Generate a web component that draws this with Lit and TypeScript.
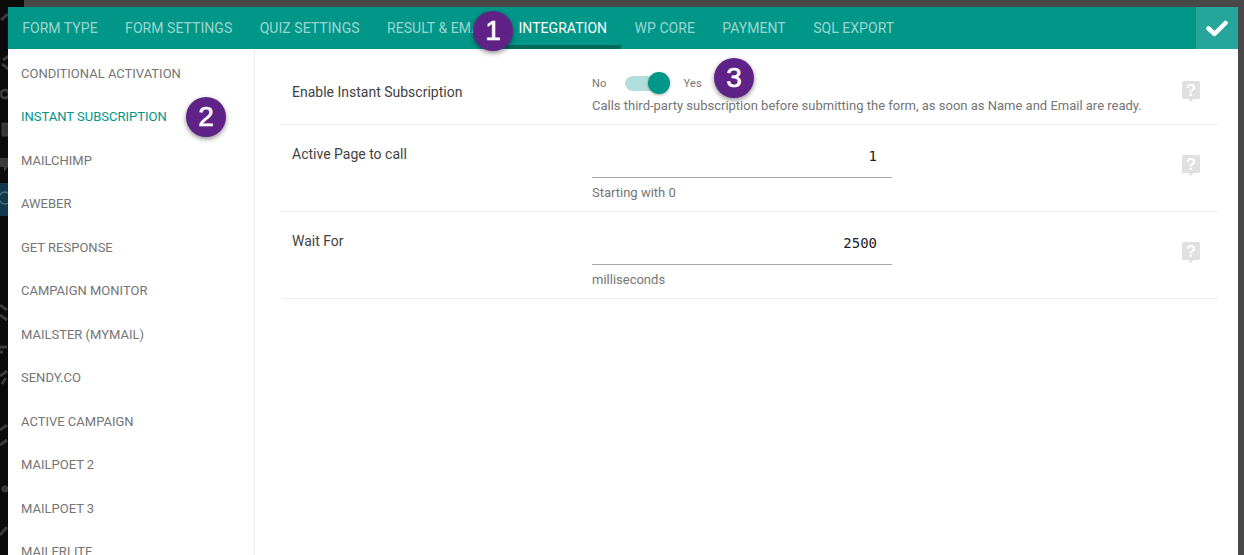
import { LitElement, html, css, svg } from "lit";
import { customElement } from "lit/decorators.js";

const TABS = ["Form Type", "Form Settings", "Quiz Settings", "Result & Email", "Integration", "WP Core", "Payment", "SQL Export"];
const SIDE = ["Conditional Activation", "Instant Subscription", "MailChimp", "AWeber", "Get Response", "Campaign Monitor", "Mailster (MyMail)", "Sendy.co", "Active Campaign", "MailPoet 2", "MailPoet 3", "MailerLite"];

@customElement("app-root")
export class AppRoot extends LitElement {
  static styles = css`
    :host {
      display: block;
      position: relative;
      height: 555px;
      overflow: hidden;
      box-sizing: border-box;
      padding: 7px 6px 0 8px;
      background: linear-gradient(90deg, #0b0b0c 24px, #484848 24px);
      font-family: Roboto, "Liberation Sans", sans-serif;
      font-size: 14px;
      color: #757575;
    }
    .deco { position: absolute; left: 0; top: 0; }
    .window {
      position: relative;
      height: 548px;
      background: #fff;
      display: flex;
      flex-direction: column;
    }
    .topbar {
      flex: none;
      height: 42px;
      background: #009688;
      display: flex;
      align-items: stretch;
      padding-left: 0.5px;
    }
    .tab {
      box-sizing: border-box;
      padding: 0 13.7px;
      line-height: 42px;
      letter-spacing: 0.05px;
      text-transform: uppercase;
      color: rgba(255, 255, 255, 0.62);
      white-space: nowrap;
      height: 42px;
    }
    .tab.on { color: #fff; border-bottom: 4px solid #00695c; }
    .tab.clip { width: 131.5px; overflow: hidden; }
    .save {
      margin-left: auto;
      width: 42px;
      background: #26a69a;
      display: flex;
      align-items: center;
      justify-content: center;
    }
    .body { flex: 1; display: flex; min-height: 0; }
    .side {
      flex: none;
      width: 247px;
      box-sizing: border-box;
      border-right: 1px solid #eeeeee;
      padding: 2.5px 0 0 13px;
      overflow: hidden;
      font-size: 13px;
    }
    .item {
      height: 43.5px;
      line-height: 43.5px;
      text-transform: uppercase;
      white-space: nowrap;
    }
    .item.on { color: #009688; }
    .main { flex: 1; padding: 0 20px 0 27px; min-width: 0; }
    .row {
      display: flex;
      align-items: flex-start;
      box-sizing: border-box;
      border-bottom: 1px solid #eeeeee;
      height: 87px;
    }
    .row.first { height: 76px; }
    .label {
      flex: none;
      width: 310px;
      box-sizing: border-box;
      padding: 19px 0 0 10px;
      line-height: 20px;
      color: #424242;
    }
    .row.first .label { padding-top: 33px; }
    .ctl { flex: none; width: 300px; }
    .switch {
      display: flex;
      align-items: center;
      height: 22px;
      margin-top: 23px;
      font-size: 11px;
      letter-spacing: 0.2px;
      color: #757575;
    }
    .track {
      position: relative;
      width: 40px;
      height: 15px;
      border-radius: 8px;
      background: #b2dfdb;
      margin: 0 19px 0 18px;
    }
    .thumb {
      position: absolute;
      right: -5px;
      top: -3.5px;
      width: 22px;
      height: 22px;
      border-radius: 50%;
      background: #009688;
      box-shadow: 0 1px 3px rgba(0, 0, 0, 0.35);
    }
    .desc { font-size: 13px; line-height: 18px; margin-top: 3px; white-space: nowrap; }
    input {
      display: block;
      width: 100%;
      box-sizing: border-box;
      height: 37px;
      margin-top: 16px;
      padding: 0 15px 6px 0;
      border: 0;
      border-bottom: 1px solid #a8a8a8;
      outline: 0;
      background: transparent;
      text-align: right;
      font-family: "DejaVu Sans Mono", monospace;
      font-size: 14px;
      color: #212121;
    }
    .hint { font-size: 13px; line-height: 18px; margin-top: 6px; }
    .help { flex: none; width: 18px; height: 22px; margin: 30px 18px 0 auto; }
    .row.first .help { margin-top: 32px; }
    .badge {
      position: absolute;
      width: 40px;
      height: 40px;
      border-radius: 50%;
      background: #5f2286;
      color: #fff;
      display: flex;
      align-items: center;
      justify-content: center;
      font-family: "Liberation Sans", sans-serif;
      font-size: 28px;
      -webkit-text-stroke: 0.6px #fff;
      box-shadow: 0 2px 5px rgba(0, 0, 0, 0.45);
    }
    .b1 { left: 473px; top: 11px; }
    .b2 { left: 186px; top: 97px; }
    .b3 { left: 714px; top: 58px; }
  `;

  private help() {
    return html`<svg class="help" viewBox="0 0 18 22">
      <path d="M1.5 0h15A1.5 1.5 0 0 1 18 1.5v15a1.5 1.5 0 0 1-1.5 1.5H11.5L9 21 6.5 18H1.5A1.5 1.5 0 0 1 0 16.5v-15A1.5 1.5 0 0 1 1.5 0z" fill="#e0e0e0"/>
      <text x="9" y="15" text-anchor="middle" font-family="Liberation Sans, sans-serif" font-weight="700" font-size="17" fill="#fff">?</text>
    </svg>`;
  }

  render() {
    return html`
      <svg class="deco" width="24" height="555" viewBox="0 0 24 555" fill="none" stroke="#3a3a3c" stroke-width="3">
        ${svg`
          <path d="M1 20l7-6M3 60l12-8M2 64l8 6" />
          <circle cx="5" cy="94" r="4" />
          <rect x="3" y="124" width="6" height="11" fill="#333"/>
          <path d="M0 158h8v9l-4 5v-5H0z" fill="#3a3a3c" stroke="none"/>
          <rect x="0" y="183" width="8" height="33" fill="#123a4e" stroke="none"/>
          <circle cx="5" cy="198" r="6" stroke="#4d6f80" stroke-width="1.5"/>
          <path d="M0 305l7 5M0 315l7 5" />
          <path d="M0 347h7M0 352h3" />
          <path d="M0 376l7-5M2 384l4-6" />
          <path d="M0 430l7-5M0 445l7-5" />
          <circle cx="5" cy="489" r="2" />
          <path d="M0 535l7-8" />
        `}
      </svg>
      <div class="window">
        <div class="topbar">
          ${TABS.map(
            (t, i) => html`<div class="tab ${i === 4 ? "on" : ""} ${i === 3 ? "clip" : ""}">${t}</div>`
          )}
          <div class="save">
            <svg width="22" height="17" viewBox="0 0 22 17">
              <path d="M2.5 8.5l6 5.5L19.5 3" fill="none" stroke="#fff" stroke-width="4.5" stroke-linecap="round" stroke-linejoin="round"/>
            </svg>
          </div>
        </div>
        <div class="body">
          <div class="side">
            ${SIDE.map((s, i) => html`<div class="item ${i === 1 ? "on" : ""}">${s}</div>`)}
          </div>
          <div class="main">
            <div class="row first">
              <div class="label">Enable Instant Subscription</div>
              <div class="ctl">
                <div class="switch">
                  <span>No</span>
                  <span class="track"><span class="thumb"></span></span>
                  <span>Yes</span>
                </div>
                <div class="desc">Calls third-party subscription before submitting the form, as soon as Name and Email are ready.</div>
              </div>
              ${this.help()}
            </div>
            <div class="row">
              <div class="label">Active Page to call</div>
              <div class="ctl">
                <input readonly value="1" />
                <div class="hint">Starting with 0</div>
              </div>
              ${this.help()}
            </div>
            <div class="row">
              <div class="label">Wait For</div>
              <div class="ctl">
                <input readonly value="2500" />
                <div class="hint">milliseconds</div>
              </div>
              ${this.help()}
            </div>
          </div>
        </div>
      </div>
      <div class="badge b1">1</div>
      <div class="badge b2">2</div>
      <div class="badge b3">3</div>
    `;
  }
}
